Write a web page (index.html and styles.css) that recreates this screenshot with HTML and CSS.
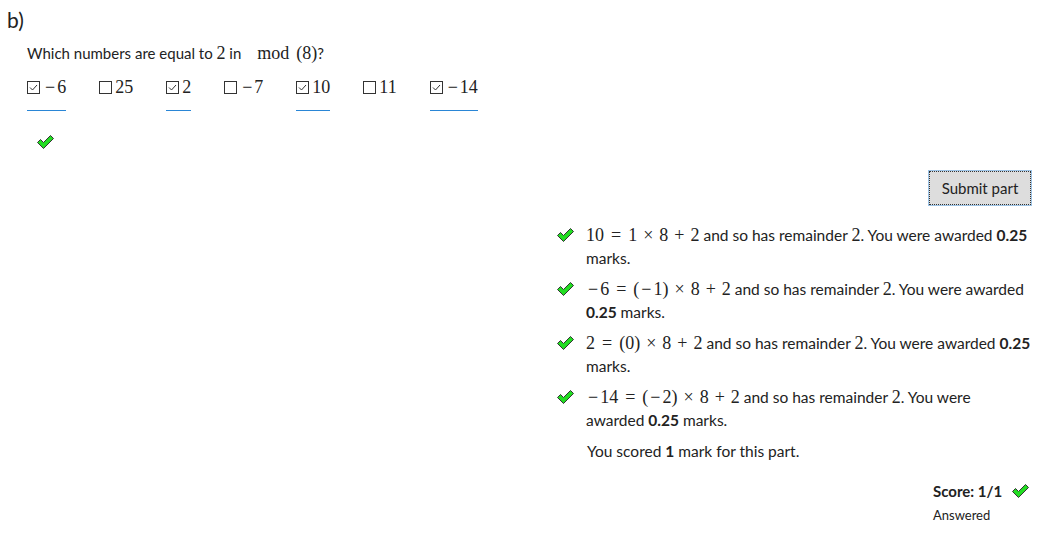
FILE: index.html
```html
<!DOCTYPE html>
<html>
<head>
<meta charset="utf-8">
<link rel="stylesheet" href="styles.css">
</head>
<body>
<div class="part">
  <h3 class="part-name">b)</h3>
  <div class="prompt">
    <p class="question">Which numbers are equal to <span class="m">2</span> in <span class="m mod">mod</span><span class="m">(8)</span>?</p>
    <div class="choices">
      <label class="choice picked"><svg class="box" viewBox="0 0 13 13"><rect x="0.5" y="0.5" width="12" height="12" fill="none" stroke="#333"/><path d="M3 6.5 L5.5 9 L10 4" fill="none" stroke="#333" stroke-width="1"/></svg><span class="m"><span class="neg">−</span>6</span></label>
      <label class="choice"><svg class="box" viewBox="0 0 13 13"><rect x="0.5" y="0.5" width="12" height="12" fill="none" stroke="#333"/></svg><span class="m">25</span></label>
      <label class="choice picked"><svg class="box" viewBox="0 0 13 13"><rect x="0.5" y="0.5" width="12" height="12" fill="none" stroke="#333"/><path d="M3 6.5 L5.5 9 L10 4" fill="none" stroke="#333" stroke-width="1"/></svg><span class="m">2</span></label>
      <label class="choice"><svg class="box" viewBox="0 0 13 13"><rect x="0.5" y="0.5" width="12" height="12" fill="none" stroke="#333"/></svg><span class="m"><span class="neg">−</span>7</span></label>
      <label class="choice picked"><svg class="box" viewBox="0 0 13 13"><rect x="0.5" y="0.5" width="12" height="12" fill="none" stroke="#333"/><path d="M3 6.5 L5.5 9 L10 4" fill="none" stroke="#333" stroke-width="1"/></svg><span class="m">10</span></label>
      <label class="choice"><svg class="box" viewBox="0 0 13 13"><rect x="0.5" y="0.5" width="12" height="12" fill="none" stroke="#333"/></svg><span class="m">11</span></label>
      <label class="choice picked"><svg class="box" viewBox="0 0 13 13"><rect x="0.5" y="0.5" width="12" height="12" fill="none" stroke="#333"/><path d="M3 6.5 L5.5 9 L10 4" fill="none" stroke="#333" stroke-width="1"/></svg><span class="m"><span class="neg">−</span>14</span></label>
    </div>
    <div class="mark">
      <svg class="tick" viewBox="0 0 17 14"><polygon points="0.5,7.5 3.5,4.5 6.5,7.5 13.5,0.5 16.5,3.5 6.5,13.5" fill="#22dd22" stroke="#333" stroke-width="1" stroke-linejoin="round"/></svg>
    </div>
  </div>
  <div class="submit-row">
    <button class="submit">Submit part</button>
  </div>
  <div class="feedback-col">
    <ul class="feedback">
      <li><svg class="tick" viewBox="0 0 17 14"><polygon points="0.5,7.5 3.5,4.5 6.5,7.5 13.5,0.5 16.5,3.5 6.5,13.5" fill="#22dd22" stroke="#333" stroke-width="1" stroke-linejoin="round"/></svg><p><span class="m">10<span class="rel">=</span>1<span class="bin">×</span>8<span class="bin">+</span>2</span> and so has remainder <span class="m">2</span>. You were awarded <b>0.25</b> marks.</p></li>
      <li><svg class="tick" viewBox="0 0 17 14"><polygon points="0.5,7.5 3.5,4.5 6.5,7.5 13.5,0.5 16.5,3.5 6.5,13.5" fill="#22dd22" stroke="#333" stroke-width="1" stroke-linejoin="round"/></svg><p><span class="m"><span class="neg">−</span>6<span class="rel">=</span>(<span class="neg">−</span>1)<span class="bin">×</span>8<span class="bin">+</span>2</span> and so has remainder <span class="m">2</span>. You were awarded <b>0.25</b> marks.</p></li>
      <li><svg class="tick" viewBox="0 0 17 14"><polygon points="0.5,7.5 3.5,4.5 6.5,7.5 13.5,0.5 16.5,3.5 6.5,13.5" fill="#22dd22" stroke="#333" stroke-width="1" stroke-linejoin="round"/></svg><p><span class="m">2<span class="rel">=</span>(0)<span class="bin">×</span>8<span class="bin">+</span>2</span> and so has remainder <span class="m">2</span>. You were awarded <b>0.25</b> marks.</p></li>
      <li><svg class="tick" viewBox="0 0 17 14"><polygon points="0.5,7.5 3.5,4.5 6.5,7.5 13.5,0.5 16.5,3.5 6.5,13.5" fill="#22dd22" stroke="#333" stroke-width="1" stroke-linejoin="round"/></svg><p><span class="m"><span class="neg">−</span>14<span class="rel">=</span>(<span class="neg">−</span>2)<span class="bin">×</span>8<span class="bin">+</span>2</span> and so has remainder <span class="m">2</span>. You were awarded <b>0.25</b> marks.</p></li>
    </ul>
    <p class="total">You scored <b>1</b> mark for this part.</p>
  </div>
  <div class="score-row">
    <div class="score">
      <div class="score-line"><b>Score: 1/1</b><svg class="tick" viewBox="0 0 17 14"><polygon points="0.5,7.5 3.5,4.5 6.5,7.5 13.5,0.5 16.5,3.5 6.5,13.5" fill="#22dd22" stroke="#333" stroke-width="1" stroke-linejoin="round"/></svg></div>
      <div class="answered">Answered</div>
    </div>
  </div>
</div>
</body>
</html>
```
FILE: styles.css
```css
html, body {
  margin: 0;
  padding: 0;
  background: #fff;
}
body {
  font-family: Lato, "Noto Sans", sans-serif;
  font-size: 15px;
  color: #222;
}
.part {
  padding: 6px 19px 0 7px;
}
.part-name {
  margin: 0;
  font-size: 21px;
  font-weight: normal;
  line-height: 28px;
  color: #222;
}
.prompt {
  padding-left: 20px;
}
.m {
  font-family: "Liberation Serif", "DejaVu Serif", serif;
  font-size: 18px;
  white-space: nowrap;
}
.rel {
  margin: 0 7px;
}
.bin {
  margin: 0 6px;
}
.neg {
  padding: 0 2px;
}
.mod {
  margin-left: 12px;
  margin-right: 7px;
}
.question {
  margin: 7px 0 0;
  line-height: 24px;
}
.choices {
  display: flex;
  gap: 33px;
  margin-top: 11px;
}
.choice {
  display: flex;
  align-items: center;
  gap: 3px;
  line-height: 22px;
  padding-bottom: 12px;
  border-bottom: 1px solid transparent;
}
.choice.picked {
  border-bottom-color: #2a86d6;
}
.box {
  width: 13px;
  height: 13px;
}
.mark {
  padding: 24px 0 0 10px;
  height: 16px;
}
.tick {
  width: 17px;
  height: 14px;
  display: block;
}
.submit-row {
  display: flex;
  justify-content: flex-end;
  margin-top: 20px;
}
.submit {
  font-family: Lato, "Noto Sans", sans-serif;
  font-size: 15px;
  color: #222;
  background: #dddddd;
  border: 1px dotted #333;
  box-shadow: 0 0 0 1px #9cc3e6;
  padding: 0 10px;
  height: 34px;
  width: 102px;
}
.feedback-col {
  margin-left: 550px;
  margin-top: 19px;
  font-size: 15.5px;
}
.feedback {
  list-style: none;
  margin: 0;
  padding: 0;
}
.feedback li {
  display: flex;
  gap: 12px;
  margin-bottom: 8px;
}
.feedback li .tick {
  margin-top: 4px;
  flex: none;
}
.feedback p {
  margin: 0;
  line-height: 23px;
}
.total {
  margin: 0 0 0 30px;
  line-height: 23px;
}
.score-row {
  display: flex;
  justify-content: flex-end;
  margin-top: 16px;
}
.score {
  width: 98px;
}
.score-line {
  display: flex;
  align-items: center;
  gap: 10px;
  line-height: 24px;
}
.answered {
  font-size: 13px;
  line-height: 24px;
}
```
